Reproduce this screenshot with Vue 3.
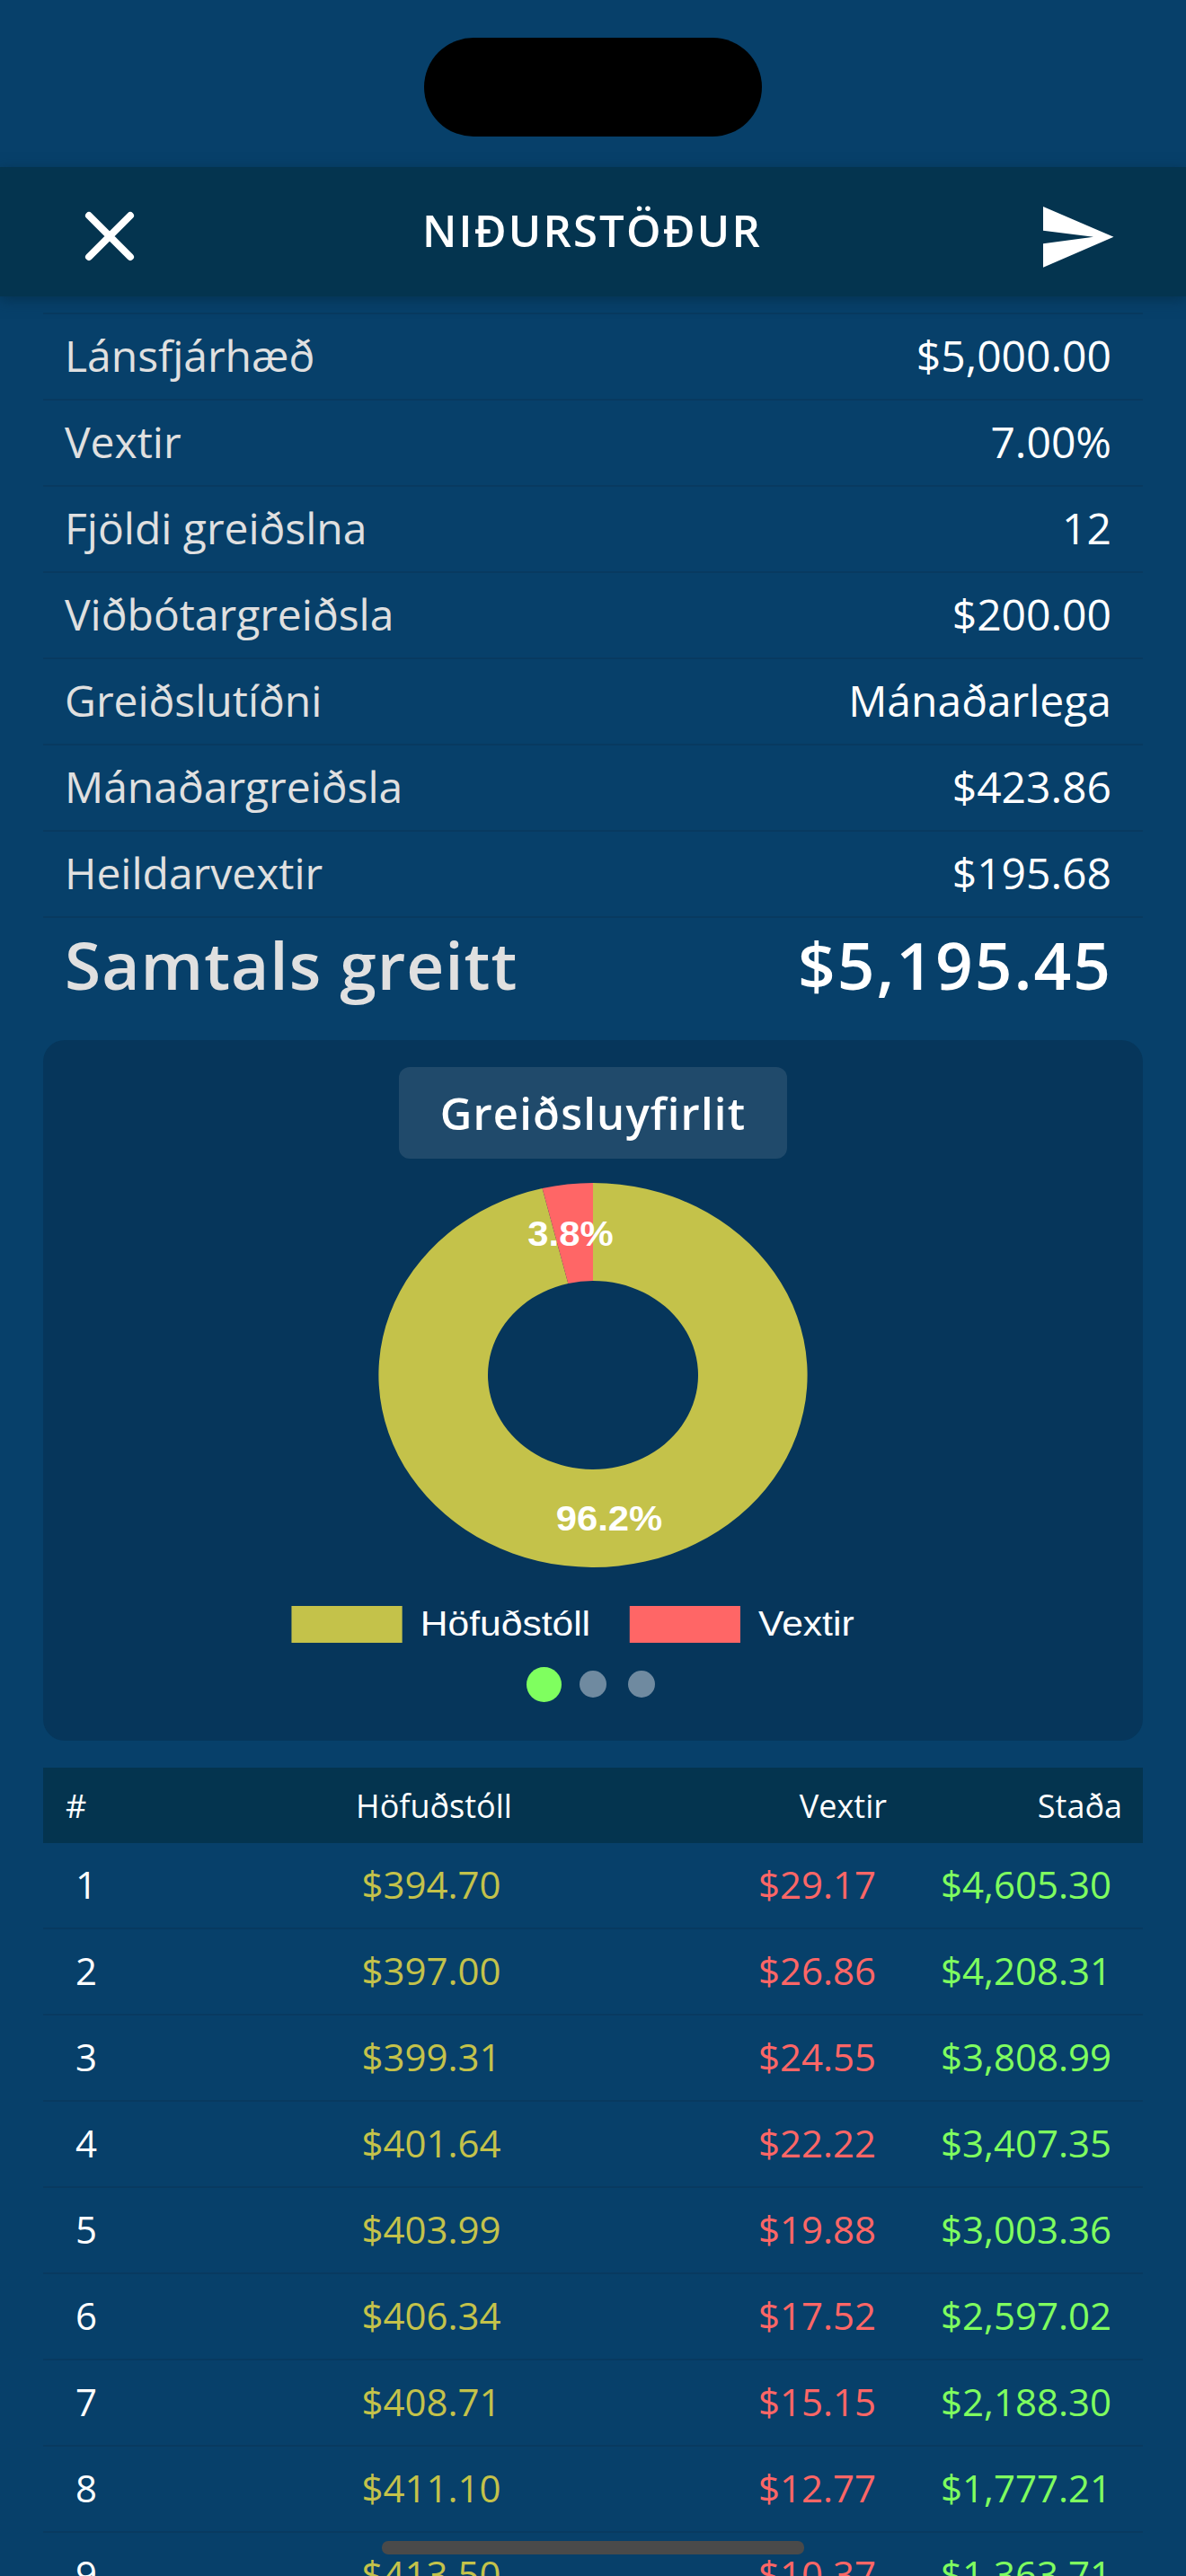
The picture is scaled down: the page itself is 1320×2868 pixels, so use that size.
<template>
  <div class="screen">
    <div class="status-bar">
      <div class="notch"></div>
    </div>

    <header class="top-bar">
      <svg class="icon-close" viewBox="0 0 60 60" width="60" height="60">
        <path d="M7 7 L53 53 M53 7 L7 53" stroke="#fff" stroke-width="8" stroke-linecap="round" fill="none" />
      </svg>
      <h1 class="top-title">NIÐURSTÖÐUR</h1>
      <svg class="icon-send" viewBox="0 0 79 68" width="79" height="68">
        <path d="M0 0 L78.5 33.8 L0 67.8 V41.3 L56 33.8 L0 26.7 Z" fill="#fff" />
      </svg>
    </header>

    <section class="summary">
      <div v-for="row in summary" :key="row.label" class="summary-row">
        <span class="summary-label">{{ row.label }}</span>
        <span class="summary-value">{{ row.value }}</span>
      </div>
      <div class="summary-total">
        <span class="total-label">Samtals greitt</span>
        <span class="total-value">$5,195.45</span>
      </div>
    </section>

    <section class="chart-card">
      <div class="chart-title">Greiðsluyfirlit</div>
      <svg class="donut" viewBox="-239 -214 478 428" width="478" height="428">
        <path v-for="slice in slices" :key="slice.color" :d="slice.d" :fill="slice.color" />
        <text
          v-for="slice in slices"
          :key="slice.text"
          class="donut-label"
          text-anchor="middle"
          :transform="`translate(${slice.tx} ${slice.ty}) scale(1.1 1)`"
        >{{ slice.text }}</text>
      </svg>
      <div class="legend">
        <div class="legend-item">
          <span class="swatch swatch-principal"></span>
          <span>Höfuðstóll</span>
        </div>
        <div class="legend-item">
          <span class="swatch swatch-interest"></span>
          <span>Vextir</span>
        </div>
      </div>
      <div class="pager">
        <span class="dot dot-active"></span>
        <span class="dot"></span>
        <span class="dot"></span>
      </div>
    </section>

    <section class="schedule">
      <div class="schedule-head">
        <span>#</span>
        <span class="center">Höfuðstóll</span>
        <span class="right">Vextir</span>
        <span class="right">Staða</span>
      </div>
      <div v-for="row in schedule" :key="row.n" class="schedule-row">
        <span class="center">{{ row.n }}</span>
        <span class="center principal">{{ row.principal }}</span>
        <span class="right interest">{{ row.interest }}</span>
        <span class="right balance">{{ row.balance }}</span>
      </div>
    </section>

    <div class="home-indicator"></div>
  </div>
</template>

<script setup>
const summary = [
  { label: 'Lánsfjárhæð', value: '$5,000.00' },
  { label: 'Vextir', value: '7.00%' },
  { label: 'Fjöldi greiðslna', value: '12' },
  { label: 'Viðbótargreiðsla', value: '$200.00' },
  { label: 'Greiðslutíðni', value: 'Mánaðarlega' },
  { label: 'Mánaðargreiðsla', value: '$423.86' },
  { label: 'Heildarvextir', value: '$195.68' },
]

const schedule = [
  { n: 1, principal: '$394.70', interest: '$29.17', balance: '$4,605.30' },
  { n: 2, principal: '$397.00', interest: '$26.86', balance: '$4,208.31' },
  { n: 3, principal: '$399.31', interest: '$24.55', balance: '$3,808.99' },
  { n: 4, principal: '$401.64', interest: '$22.22', balance: '$3,407.35' },
  { n: 5, principal: '$403.99', interest: '$19.88', balance: '$3,003.36' },
  { n: 6, principal: '$406.34', interest: '$17.52', balance: '$2,597.02' },
  { n: 7, principal: '$408.71', interest: '$15.15', balance: '$2,188.30' },
  { n: 8, principal: '$411.10', interest: '$12.77', balance: '$1,777.21' },
  { n: 9, principal: '$413.50', interest: '$10.37', balance: '$1,363.71' },
]

// the doughnut is stretched sideways, so radii differ per axis
const RX = 238.6, RY = 214, IRX = 117, IRY = 105

function ringSlice(from, to) {
  const a = (from / 100) * 2 * Math.PI
  const b = (to / 100) * 2 * Math.PI
  const pt = (rx, ry, t) => `${(rx * Math.sin(t)).toFixed(2)} ${(-ry * Math.cos(t)).toFixed(2)}`
  const large = to - from > 50 ? 1 : 0
  return [
    `M${pt(RX, RY, a)}`,
    `A${RX} ${RY} 0 ${large} 1 ${pt(RX, RY, b)}`,
    `L${pt(IRX, IRY, b)}`,
    `A${IRX} ${IRY} 0 ${large} 0 ${pt(IRX, IRY, a)}`,
    'Z',
  ].join(' ')
}

const slices = [
  { color: '#c4c24a', d: ringSlice(0, 96.2), text: '96.2%', tx: 18, ty: 173 },
  { color: '#ff6666', d: ringSlice(96.2, 100), text: '3.8%', tx: -25, ty: -144 },
]
</script>

<style scoped>
.screen {
  position: relative;
  width: 1320px;
  height: 2868px;
  overflow: hidden;
  background: #07406a;
  color: #fff;
  font-family: "Open Sans", "Noto Sans", sans-serif;
}

.status-bar {
  height: 186px;
  padding-top: 42px;
  box-sizing: border-box;
  display: flex;
  justify-content: center;
}

.notch {
  width: 376px;
  height: 110px;
  border-radius: 55px;
  background: #000;
}

.top-bar {
  position: relative;
  z-index: 1;
  height: 144px;
  display: grid;
  grid-template-columns: 60px 1fr 79px;
  align-items: center;
  padding: 0 80px 0 92px;
  background: #04344f;
  box-shadow: 0 4px 14px rgba(3, 40, 64, 0.55);
}

.icon-close { margin-top: 10px; }
.icon-send  { margin-top: 11px; }

.top-title {
  margin: 0 0 4px;
  padding-left: 5px;
  text-align: center;
  font-size: 49px;
  font-weight: 600;
  letter-spacing: 2.2px;
}

.summary {
  padding: 18px 48px 0;
}

.summary-row {
  height: 96px;
  box-sizing: border-box;
  border-top: 2px solid #083a60;
  display: flex;
  align-items: center;
  justify-content: space-between;
  padding: 0 35px 3px 24px;
  font-size: 48px;
}

.summary-label { color: #e0e0e0; }

.summary-total {
  height: 110px;
  border-top: 2px solid #083a60;
  box-sizing: border-box;
  display: flex;
  align-items: center;
  justify-content: space-between;
  padding: 0 34px 6px 24px;
  font-size: 73px;
  font-weight: 600;
}

.total-label {
  color: #e0e0e0;
  letter-spacing: 1px;
}

.total-value { letter-spacing: 2px; }

.chart-card {
  margin: 28px 48px 0;
  height: 780px;
  box-sizing: border-box;
  padding-top: 30px;
  border-radius: 24px;
  background: #06365b;
  display: flex;
  flex-direction: column;
  align-items: center;
}

.chart-title {
  width: 432px;
  height: 102px;
  border-radius: 12px;
  background: #204a6b;
  display: flex;
  align-items: center;
  justify-content: center;
  font-size: 49px;
  font-weight: 600;
  letter-spacing: 1.2px;
}

.donut {
  display: block;
  margin-top: 27px;
}

.donut-label {
  fill: #fff;
  font-family: "Liberation Sans", Arial, sans-serif;
  font-size: 38px;
  font-weight: 700;
}

.legend {
  margin-top: 43px;
  display: flex;
  gap: 39px;
  margin-right: 44px;
  transform: scaleX(1.12);
  font-family: "Liberation Sans", Arial, sans-serif;
  font-size: 38px;
}

.legend-item {
  display: flex;
  align-items: center;
  gap: 18px;
  height: 41px;
}

.swatch {
  display: block;
  width: 110px;
  height: 41px;
}

.swatch-principal { background: #c4c24a; }
.swatch-interest  { background: #ff6666; }

.pager {
  margin-top: 26px;
  margin-right: 5px;
  height: 40px;
  display: flex;
  align-items: center;
  gap: 24px;
}

.dot {
  width: 30px;
  height: 30px;
  border-radius: 50%;
  background: #6f8aa0;
}

.dot-active {
  width: 39px;
  height: 39px;
  margin-right: -4px;
  background: #7fff5f;
}

.schedule {
  margin: 30px 48px 0;
}

.schedule-head {
  height: 84px;
  display: grid;
  grid-template-columns: 71px 678px 165px 262px;
  align-items: center;
  padding: 0 23px 0 25px;
  background: #04344f;
  font-size: 36px;
}

.schedule-row {
  height: 96px;
  box-sizing: border-box;
  border-bottom: 2px solid #083a60;
  display: grid;
  grid-template-columns: 96px 672px 159px 262px;
  align-items: center;
  padding: 0 35px 3px 0;
  font-size: 42px;
}

.center { text-align: center; }
.right  { text-align: right; }

.principal { color: #c4c24a; }
.interest  { color: #ff6666; }
.balance   { color: #7fff5f; }

.home-indicator {
  position: absolute;
  left: 425px;
  top: 2829px;
  width: 470px;
  height: 15px;
  border-radius: 7px;
  background: #4a4a4a;
}
</style>
